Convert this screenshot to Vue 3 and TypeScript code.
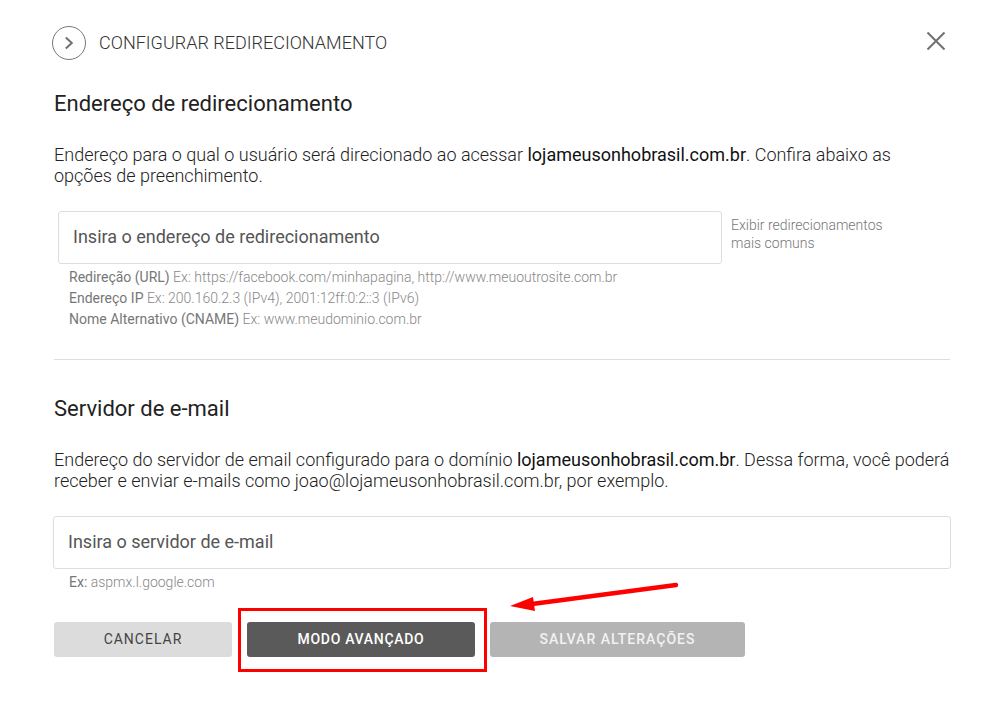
<script setup lang="ts">
const hints: { label: string; text: string }[] = [
  { label: 'Redireção (URL)', text: 'Ex: https://facebook.com/minhapagina, http://www.meuoutrosite.com.br' },
  { label: 'Endereço IP', text: 'Ex: 200.160.2.3 (IPv4), 2001:12ff:0:2::3 (IPv6)' },
  { label: 'Nome Alternativo (CNAME)', text: 'Ex: www.meudominio.com.br' },
]
</script>

<template>
  <div class="page">
    <header class="top">
      <span class="circle">
        <svg width="10" height="14" viewBox="0 0 10 14"><path d="M1.8 1.4 L7.8 7 L1.8 12.6" fill="none" stroke="#707070" stroke-width="2" /></svg>
      </span>
      <span class="title">CONFIGURAR REDIRECIONAMENTO</span>
      <svg class="close" width="20" height="20" viewBox="0 0 20 20"><path d="M1.5 1.5 L18.5 18.5 M18.5 1.5 L1.5 18.5" fill="none" stroke="#707070" stroke-width="2" /></svg>
    </header>

    <section class="sec-one">
      <h2>Endereço de redirecionamento</h2>
      <p class="desc">Endereço para o qual o usuário será direcionado ao acessar <b>lojameusonhobrasil.com.br</b>. Confira abaixo as opções de preenchimento.</p>
      <div class="field-row">
        <div class="field one">Insira o endereço de redirecionamento</div>
        <a class="common">Exibir redirecionamentos<br />mais comuns</a>
      </div>
      <ul class="hints">
        <li v-for="h in hints" :key="h.label"><strong>{{ h.label }}</strong> {{ h.text }}</li>
      </ul>
    </section>

    <hr class="divider" />

    <section class="sec-two">
      <h2>Servidor de e-mail</h2>
      <p class="desc">Endereço do servidor de email configurado para o domínio <b>lojameusonhobrasil.com.br</b>. Dessa forma, você poderá receber e enviar e-mails como joao@lojameusonhobrasil.com.br, por exemplo.</p>
      <div class="field two">Insira o servidor de e-mail</div>
      <div class="hints single"><strong>Ex:</strong> aspmx.l.google.com</div>
    </section>

    <div class="actions">
      <button class="btn cancel">CANCELAR</button>
      <button class="btn advanced">MODO AVANÇADO</button>
      <button class="btn save">SALVAR ALTERAÇÕES</button>
    </div>

    <div class="red-box"></div>
    <svg class="arrow" width="180" height="40" viewBox="0 0 180 40">
      <path d="M166 8 L22 27" stroke="#f00" stroke-width="4.5" stroke-linecap="round" fill="none" />
      <path d="M0 29 L23 20 L25 34 Z" fill="#f00" />
    </svg>
  </div>
</template>

<style scoped>
.page {
  position: relative;
  width: 1003px;
  height: 709px;
  box-sizing: border-box;
  padding: 25px 53px 0 54px;
  background: #fff;
  font-family: Roboto, "Liberation Sans", sans-serif;
  color: #333;
  overflow: hidden;
}
.top {
  display: flex;
  align-items: center;
  height: 35px;
  margin-left: -2px;
}
.circle {
  width: 34px;
  height: 34px;
  box-sizing: border-box;
  border: 1.2px solid #777;
  border-radius: 50%;
  display: flex;
  align-items: center;
  justify-content: center;
}
.title {
  margin-left: 13px;
  font-size: 18px;
  font-weight: 300;
  color: #333;
}
.close {
  margin-left: auto;
  margin-right: 4px;
  margin-top: -4px;
}
h2 {
  margin: 0;
  font-size: 22px;
  font-weight: 400;
  line-height: 26px;
  color: #222;
}
.sec-one {
  margin-top: 31px;
}
.desc {
  margin: 27px 0 0;
  font-size: 18px;
  font-weight: 300;
  line-height: 21px;
  color: #222;
}
.desc b {
  font-weight: 400;
  color: #111;
}
.field-row {
  display: flex;
  margin-top: 25px;
  margin-left: 4px;
}
.field {
  box-sizing: border-box;
  height: 53px;
  padding-bottom: 2px;
  border: 1px solid #ddd;
  border-radius: 3px;
  display: flex;
  align-items: center;
  font-size: 18px;
  color: #555;
}
.field.one {
  width: 664px;
  padding-left: 14px;
}
.common {
  margin-left: 9px;
  margin-top: 5px;
  font-size: 14px;
  font-weight: 300;
  line-height: 18px;
  color: #777;
}
.hints {
  list-style: none;
  margin: 3px 0 0 15px;
  padding: 0;
  font-size: 14px;
  font-weight: 300;
  line-height: 21px;
  color: #888;
}
.hints strong {
  font-weight: 400;
  color: #777;
}
.divider {
  margin: 29px 0 0;
  border: 0;
  border-top: 1px solid #ddd;
}
.sec-two {
  margin-top: 36px;
}
.field.two {
  width: 898px;
  margin: 25px 0 0 -1px;
  padding-left: 14px;
}
.hints.single {
  margin-top: 3px;
}
.actions {
  display: flex;
  gap: 15px;
  margin-top: 29px;
}
.btn {
  height: 35px;
  border: 0;
  border-radius: 3px;
  padding: 0 0 2px;
  font-family: inherit;
  font-size: 14px;
  font-weight: 400;
  letter-spacing: 1px;
}
.cancel {
  width: 178px;
  background: #dcdcdc;
  color: #444;
}
.advanced {
  width: 228px;
  background: #5a5a5a;
  color: #fff;
  font-weight: 500;
  letter-spacing: 0.7px;
}
.save {
  width: 255px;
  background: #b4b4b4;
  color: #f2f2f2;
  font-weight: 500;
}
.red-box {
  position: absolute;
  left: 238px;
  top: 608px;
  width: 249px;
  height: 64px;
  box-sizing: border-box;
  border: 3px solid #f00;
}
.arrow {
  position: absolute;
  left: 510px;
  top: 577px;
}
</style>
